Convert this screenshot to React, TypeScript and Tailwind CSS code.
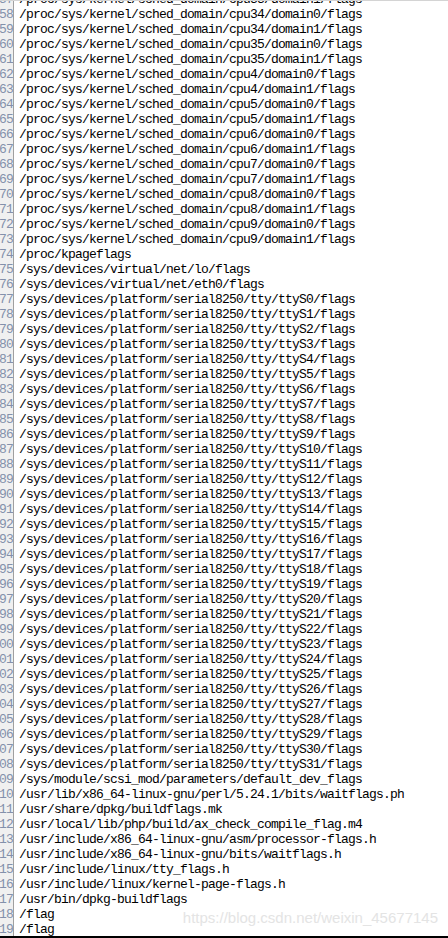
import React from "react";

const lines: string[] = [];
const sd = "/proc/sys/kernel/sched_domain/";
lines.push(sd + "cpu33/domain1/flags");
lines.push(sd + "cpu34/domain0/flags");
lines.push(sd + "cpu34/domain1/flags");
lines.push(sd + "cpu35/domain0/flags");
lines.push(sd + "cpu35/domain1/flags");
for (const c of [4, 5, 6, 7, 8, 9]) {
  lines.push(sd + `cpu${c}/domain0/flags`);
  lines.push(sd + `cpu${c}/domain1/flags`);
}
lines.push("/proc/kpageflags");
lines.push("/sys/devices/virtual/net/lo/flags");
lines.push("/sys/devices/virtual/net/eth0/flags");
for (let i = 0; i < 32; i++) {
  lines.push(`/sys/devices/platform/serial8250/tty/ttyS${i}/flags`);
}
lines.push("/sys/module/scsi_mod/parameters/default_dev_flags");
lines.push("/usr/lib/x86_64-linux-gnu/perl/5.24.1/bits/waitflags.ph");
lines.push("/usr/share/dpkg/buildflags.mk");
lines.push("/usr/local/lib/php/build/ax_check_compile_flag.m4");
lines.push("/usr/include/x86_64-linux-gnu/asm/processor-flags.h");
lines.push("/usr/include/x86_64-linux-gnu/bits/waitflags.h");
lines.push("/usr/include/linux/tty_flags.h");
lines.push("/usr/include/linux/kernel-page-flags.h");
lines.push("/usr/bin/dpkg-buildflags");
lines.push("/flag");
lines.push("/flag");

export default function App() {
  return (
    <div className="w-[448px] h-[938px] bg-white overflow-hidden flex flex-col relative">
      <div className="h-px bg-[#d4d4d4] shrink-0" />
      <div className="flex-1 overflow-hidden">
        <div className="mt-[-9px] flex flex-col">
          {lines.map((t, i) => (
            <div key={i} className="flex h-[15px] leading-[15px] font-['Liberation_Mono',monospace] text-[13px] tracking-[-0.8px]">
              <div className="w-[13px] shrink-0 bg-[#f0f0f0] overflow-hidden flex justify-end text-[#8391ab]">
                <span className="whitespace-nowrap">{1057 + i}</span>
              </div>
              <div className="w-px shrink-0 bg-[#a0a0a0]" />
              <div className="pl-[5px] whitespace-pre text-black">{t}</div>
            </div>
          ))}
        </div>
      </div>
      <div className="h-[2px] bg-black shrink-0" />
      <div className="absolute right-[10px] top-[908px] text-[15px] leading-[20px] text-[#e4e4e4] font-['Liberation_Sans',Arial,sans-serif] whitespace-nowrap">
        https://blog.csdn.net/weixin_45677145
      </div>
    </div>
  );
}
